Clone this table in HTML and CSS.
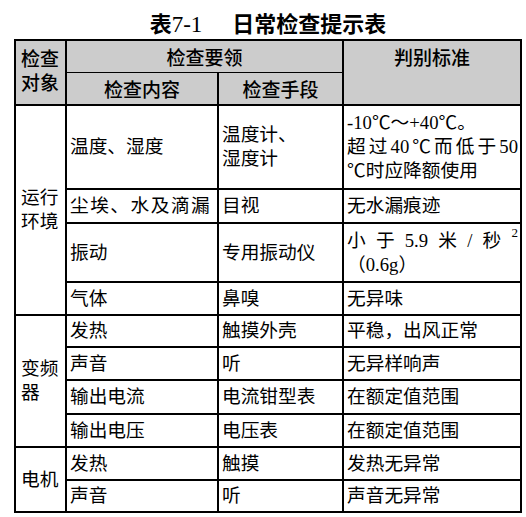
FILE: index.html
```html
<!DOCTYPE html>
<html lang="zh-CN">
<head>
<meta charset="utf-8">
<title>日常检查提示表</title>
<link rel="stylesheet" href="styles.css">
</head>
<body>
<div class="page">
  <h1 class="title"><span class="tno">表<span class="num">7-1</span></span><span class="tname">日常检查提示表</span></h1>
  <table class="grid">
    <colgroup>
      <col class="c1"><col class="c2"><col class="c3"><col class="c4">
    </colgroup>
    <thead>
      <tr class="h1">
        <th rowspan="2" class="hobj">检查<br>对象</th>
        <th colspan="2" class="hkey">检查要领</th>
        <th rowspan="2" class="hstd">判别标准</th>
      </tr>
      <tr class="h2">
        <th class="hsub">检查内容</th>
        <th class="hsub">检查手段</th>
      </tr>
    </thead>
    <tbody>
      <tr class="r84">
        <td rowspan="4" class="obj">运行<br>环境</td>
        <td>温度、湿度</td>
        <td>温度计、<br>湿度计</td>
        <td class="std"><div>-10℃～+40℃。</div><div class="jl">超过40℃而低于50</div><div>℃时应降额使用</div></td>
      </tr>
      <tr class="r34">
        <td class="wide">尘埃、水及滴漏</td>
        <td>目视</td>
        <td>无水漏痕迹</td>
      </tr>
      <tr class="r59">
        <td>振动</td>
        <td>专用振动仪</td>
        <td class="std"><div class="spread"><span>小</span><span>于</span><span class="lat">5.9</span><span>米</span><span class="lat">/</span><span>秒</span><span class="lat sup">2</span></div><div>（<span class="lat">0.6g</span>）</div></td>
      </tr>
      <tr class="r33">
        <td>气体</td>
        <td>鼻嗅</td>
        <td>无异味</td>
      </tr>
      <tr class="r32">
        <td rowspan="4" class="obj">变频<br>器</td>
        <td>发热</td>
        <td>触摸外壳</td>
        <td>平稳，出风正常</td>
      </tr>
      <tr class="r33">
        <td>声音</td>
        <td>听</td>
        <td>无异样响声</td>
      </tr>
      <tr class="r34">
        <td>输出电流</td>
        <td>电流钳型表</td>
        <td>在额定值范围</td>
      </tr>
      <tr class="r33">
        <td>输出电压</td>
        <td>电压表</td>
        <td>在额定值范围</td>
      </tr>
      <tr class="r33">
        <td rowspan="2" class="obj">电机</td>
        <td>发热</td>
        <td>触摸</td>
        <td>发热无异常</td>
      </tr>
      <tr class="r32">
        <td>声音</td>
        <td>听</td>
        <td>声音无异常</td>
      </tr>
    </tbody>
  </table>
</div>
</body>
</html>
```

FILE: styles.css
```css
html, body {
  margin: 0;
  padding: 0;
  background: #fff;
}

.page {
  width: 508px;
  padding-left: 14px;
}

.title {
  margin: 0;
  height: 39px;
  box-sizing: border-box;
  padding-top: 7px;
  line-height: 30px;
  text-align: center;
  font-family: "Noto Sans CJK SC", sans-serif;
  font-size: 22px;
  font-weight: 700;
  color: #000;
}

.title .num {
  font-family: "Liberation Serif", serif;
  font-weight: 400;
  font-size: 23px;
}

.title .tname {
  margin-left: 30px;
}

.grid {
  width: 508px;
  border-collapse: collapse;
  table-layout: fixed;
  color: #000;
}

.c1 { width: 51px; }
.c2 { width: 152px; }
.c3 { width: 125px; }
.c4 { width: 178px; }

.grid th {
  background: #cccccc;
  border: 2px solid #000;
  font-family: "Noto Sans CJK SC", sans-serif;
  font-weight: 500;
  font-size: 19px;
  line-height: 24px;
  padding: 0;
  text-align: center;
  vertical-align: middle;
  white-space: nowrap;
}

.grid .h1 th { height: 31px; }
.grid .h2 th { height: 31px; }

.grid th.hkey { border-bottom: 1px solid #000; }
.grid th.hsub { border-top: 1px solid #000; }

.grid th.hobj {
  text-align: left;
  vertical-align: top;
  padding: 5px 0 0 5px;
}

.grid th.hstd {
  vertical-align: top;
  padding-top: 4px;
}

.grid td {
  border: 2px solid #000;
  font-family: "Liberation Serif", "Noto Sans CJK SC", serif;
  font-size: 18.7px;
  line-height: 24px;
  padding: 0 3px;
  vertical-align: middle;
  text-align: left;
  white-space: nowrap;
}

.grid td.obj {
  padding: 0 0 0 5px;
}

.grid td.wide { letter-spacing: 1.5px; }

.grid td.std { padding: 0 2px 0 3px; }

.jl {
  text-align: justify;
  text-align-last: justify;
}

.spread {
  display: flex;
  justify-content: space-between;
}

.lat { font-family: "Liberation Serif", serif; }

.sup {
  font-size: 13px;
  line-height: 14px;
  align-self: flex-start;
  margin-top: -3px;
}

.r84 td { height: 82px; }
.r59 td { height: 57px; }
.r34 td { height: 32px; }
.r33 td { height: 31px; }
.r32 td { height: 30px; }
```
